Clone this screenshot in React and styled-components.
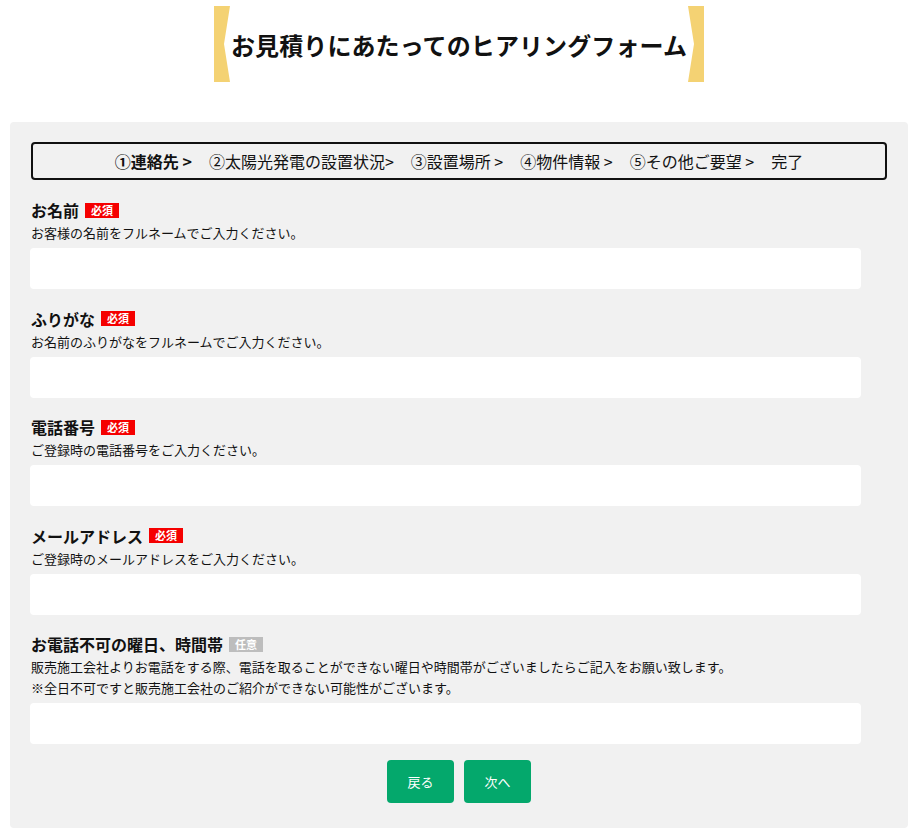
import React from 'react';
import styled, { createGlobalStyle } from 'styled-components';

const GlobalStyle = createGlobalStyle`
  body {
    margin: 0;
    background: #fff;
    font-family: "Noto Sans CJK JP", "Noto Sans", sans-serif;
    color: #111;
  }
`;

const Page = styled.div`
  width: 898px;
  margin: 0 0 0 10px;
  padding-top: 6px;
`;

const TitleWrap = styled.div`
  display: flex;
  justify-content: center;
  margin-bottom: 40px;
`;

const Title = styled.h1`
  display: flex;
  align-items: stretch;
  margin: 0;
  height: 76px;
`;

const TitleText = styled.span`
  display: flex;
  align-items: center;
  padding: 0 1px;
  font-size: 24px;
  font-weight: 700;
  letter-spacing: 0.1px;
  color: #111;
`;

const Bracket = ({ flip }) => (
  <svg width="16" height="76" viewBox="0 0 16 76" style={flip ? { transform: 'scaleX(-1)' } : undefined}>
    <polygon points="0,0 16,0 10,38 16,76 0,76" fill="#f4d273" />
  </svg>
);

const Panel = styled.div`
  background: #f1f1f1;
  border-radius: 4px;
  padding: 20px 21px 25px;
`;

const Steps = styled.div`
  display: flex;
  justify-content: center;
  align-items: center;
  gap: 17px;
  height: 33px;
  padding-bottom: 1px;
  border: 2px solid #111;
  border-radius: 4px;
  font-size: 16px;
  margin-bottom: 18px;
`;

const Step = styled.span`
  font-weight: ${p => (p.$current ? 700 : 400)};
  white-space: pre;
`;

const Field = styled.div`
  margin-bottom: ${p => (p.$last ? '16px' : '17.5px')};
`;

const LabelRow = styled.div`
  display: flex;
  align-items: center;
  height: 24px;
`;

const Label = styled.label`
  font-size: 16px;
  font-weight: 700;
`;

const Badge = styled.span`
  margin-left: 6px;
  background: ${p => (p.$optional ? '#bdbdbd' : '#f50000')};
  color: #fff;
  font-size: 11px;
  font-weight: 700;
  line-height: 15px;
  padding: 0 6px;
`;

const Desc = styled.p`
  margin: 0;
  font-size: 13px;
  line-height: 21px;
`;

const Input = styled.input`
  display: block;
  box-sizing: border-box;
  width: 831px;
  height: 41px;
  margin-top: 5px;
  margin-left: -1px;
  border: none;
  border-radius: 4px;
  background: #fff;
  font-family: inherit;
  font-size: 14px;
  padding: 0 10px;
`;

const Buttons = styled.div`
  display: flex;
  justify-content: center;
  gap: 10px;
`;

const Button = styled.button`
  width: 67px;
  height: 43px;
  border: none;
  border-radius: 4px;
  background: #04a86c;
  color: #fff;
  font-family: inherit;
  font-size: 13px;
  cursor: pointer;
`;

const steps = [
  { t: '①連絡先 >', current: true },
  { t: '②太陽光発電の設置状況>' },
  { t: '③設置場所 >' },
  { t: '④物件情報 >' },
  { t: '⑤その他ご要望 >' },
  { t: '完了' },
];

const fields = [
  { label: 'お名前', desc: ['お客様の名前をフルネームでご入力ください。'] },
  { label: 'ふりがな', desc: ['お名前のふりがなをフルネームでご入力ください。'] },
  { label: '電話番号', desc: ['ご登録時の電話番号をご入力ください。'] },
  { label: 'メールアドレス', desc: ['ご登録時のメールアドレスをご入力ください。'] },
  {
    label: 'お電話不可の曜日、時間帯',
    optional: true,
    desc: [
      '販売施工会社よりお電話をする際、電話を取ることができない曜日や時間帯がございましたらご記入をお願い致します。',
      '※全日不可ですと販売施工会社のご紹介ができない可能性がございます。',
    ],
  },
];

export default function App() {
  return (
    <>
      <GlobalStyle />
      <Page>
        <TitleWrap>
          <Title>
            <Bracket />
            <TitleText>お見積りにあたってのヒアリングフォーム</TitleText>
            <Bracket flip />
          </Title>
        </TitleWrap>
        <Panel>
          <Steps>
            {steps.map(s => (
              <Step key={s.t} $current={s.current}>{s.t}</Step>
            ))}
          </Steps>
          {fields.map((f, idx) => (
            <Field key={f.label} $last={idx === fields.length - 1}>
              <LabelRow>
                <Label>{f.label}</Label>
                <Badge $optional={f.optional}>{f.optional ? '任意' : '必須'}</Badge>
              </LabelRow>
              <Desc>
                {f.desc.map((d, i) => (
                  <React.Fragment key={i}>
                    {i > 0 && <br />}
                    {d}
                  </React.Fragment>
                ))}
              </Desc>
              <Input type="text" />
            </Field>
          ))}
          <Buttons>
            <Button>戻る</Button>
            <Button>次へ</Button>
          </Buttons>
        </Panel>
      </Page>
    </>
  );
}
